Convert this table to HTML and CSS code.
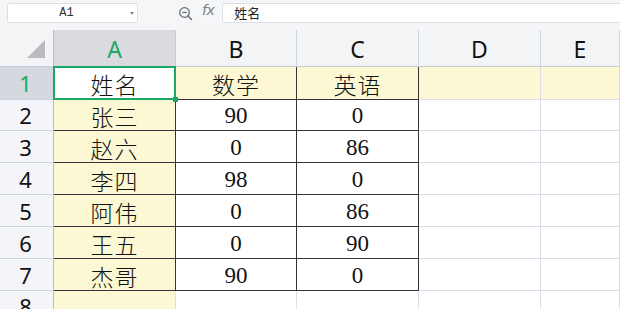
FILE: index.html
```html
<!DOCTYPE html>
<html>
<head>
<meta charset="utf-8">
<link rel="stylesheet" href="styles.css">
</head>
<body>
<div class="app">
  <div class="toolbar">
    <div class="namebox"><span class="ref">A1</span><span class="caret"></span></div>
    <svg class="zoom" width="15" height="15" viewBox="0 0 15 15">
      <circle cx="6.5" cy="6.5" r="4.8" fill="none" stroke="#6b6e75" stroke-width="1.3"/>
      <line x1="4.3" y1="6.5" x2="8.7" y2="6.5" stroke="#6b6e75" stroke-width="1.3"/>
      <line x1="10" y1="10" x2="13.5" y2="13.5" stroke="#6b6e75" stroke-width="1.5" stroke-linecap="round"/>
    </svg>
    <span class="fx">fx</span>
    <div class="formula">姓名</div>
  </div>
  <div class="sheet">
    <div class="corner"><span class="tri"></span></div>
    <div class="ch sel">A</div>
    <div class="ch">B</div>
    <div class="ch">C</div>
    <div class="ch">D</div>
    <div class="ch last">E</div>

    <div class="rh sel">1</div>
    <div class="c t active cn">姓名<span class="selbox"><span class="handle"></span></span></div>
    <div class="c t y cn">数学</div>
    <div class="c t y cn">英语</div>
    <div class="c y"></div>
    <div class="c y"></div>

    <div class="rh">2</div>
    <div class="c t y cn">张三</div>
    <div class="c t num">90</div>
    <div class="c t num">0</div>
    <div class="c"></div>
    <div class="c"></div>

    <div class="rh">3</div>
    <div class="c t y cn">赵六</div>
    <div class="c t num">0</div>
    <div class="c t num">86</div>
    <div class="c"></div>
    <div class="c"></div>

    <div class="rh">4</div>
    <div class="c t y cn">李四</div>
    <div class="c t num">98</div>
    <div class="c t num">0</div>
    <div class="c"></div>
    <div class="c"></div>

    <div class="rh">5</div>
    <div class="c t y cn">阿伟</div>
    <div class="c t num">0</div>
    <div class="c t num">86</div>
    <div class="c"></div>
    <div class="c"></div>

    <div class="rh">6</div>
    <div class="c t y cn">王五</div>
    <div class="c t num">0</div>
    <div class="c t num">90</div>
    <div class="c"></div>
    <div class="c"></div>

    <div class="rh">7</div>
    <div class="c t y cn">杰哥</div>
    <div class="c t num">90</div>
    <div class="c t num">0</div>
    <div class="c"></div>
    <div class="c"></div>

    <div class="rh">8</div>
    <div class="c y"></div>
    <div class="c"></div>
    <div class="c"></div>
    <div class="c"></div>
    <div class="c"></div>
  </div>
</div>
</body>
</html>
```
FILE: styles.css
```css
html, body {
  margin: 0;
  padding: 0;
}
body {
  width: 620px;
  height: 309px;
  overflow: hidden;
  background: #f4f5f7;
  font-family: "Noto Sans", "Noto Sans CJK SC", sans-serif;
}
.app {
  display: flex;
  flex-direction: column;
  width: 620px;
  height: 309px;
}
.toolbar {
  height: 30px;
  display: flex;
  align-items: flex-start;
  background: #f5f6f7;
  flex: none;
}
.namebox {
  margin: 3px 0 0 7px;
  width: 131px;
  height: 20px;
  box-sizing: border-box;
  background: #fff;
  border: 1px solid #dcdee3;
  border-radius: 2px;
  display: flex;
  align-items: center;
  position: relative;
}
.ref {
  flex: 1;
  text-align: center;
  padding-right: 12px;
  font-family: "Liberation Mono", monospace;
  font-size: 12px;
  color: #333;
}
.caret {
  position: absolute;
  right: 3px;
  top: 8px;
  width: 0;
  height: 0;
  border-left: 2px solid transparent;
  border-right: 2px solid transparent;
  border-top: 3px solid #888;
}
.zoom {
  margin: 6px 0 0 40px;
  flex: none;
}
.fx {
  margin: 2px 0 0 9px;
  font-family: "DejaVu Sans", sans-serif;
  font-style: italic;
  font-size: 14px;
  color: #7a7d84;
  letter-spacing: -0.5px;
}
.formula {
  margin: 3px -10px 0 8px;
  flex: 1;
  height: 20px;
  box-sizing: border-box;
  background: #fff;
  border: 1px solid #dcdee3;
  border-radius: 2px;
  padding-left: 11px;
  font-family: "Noto Sans CJK SC", sans-serif;
  font-size: 13px;
  line-height: 18px;
  color: #222;
}
.sheet {
  flex: 1;
  display: grid;
  grid-template-columns: 54px 122px 121px 122px 122px 1fr;
  grid-template-rows: 37px 33px 31px 32px 32px 32px 32px 32px 1fr;
  background: #fff;
}
.sheet > div {
  box-sizing: border-box;
  display: flex;
  align-items: center;
  justify-content: center;
}
.corner {
  background: #f3f4f6;
  border-right: 1px solid #b8bcd3;
  border-bottom: 1px solid #c8cbd6;
  position: relative;
}
.tri {
  position: absolute;
  left: 27px;
  top: 10px;
  width: 0;
  height: 0;
  border-left: 18px solid transparent;
  border-bottom: 18px solid #b9babd;
}
.ch {
  background: #f3f4f6;
  border-bottom: 1px solid #c8cbd6;
  border-right: 1px solid #d2d5dd;
  font-size: 23px;
  color: #111;
  padding-top: 1px;
}
.ch.sel {
  background: #d9dbe0;
  color: #1aa867;
  border-right-color: #c8cbd3;
}
.rh {
  background: #f4f5f8;
  border-right: 1px solid #b8bcd3;
  border-bottom: 1px solid #cdd0e0;
  font-size: 22px;
  color: #111;
  padding-right: 2px;
}
.rh.sel {
  background: #d5d8de;
  color: #1aa867;
}
.c {
  border-right: 1px solid #dcdcea;
  border-bottom: 1px solid #dcdcea;
  color: #111;
  padding-top: 2px;
}
.c.y {
  background: #fbf8d3;
}
.c.t {
  border-right-color: #333;
  border-bottom-color: #333;
}
.cn {
  font-family: "Noto Sans CJK SC", sans-serif;
  font-weight: 300;
  font-size: 23px;
  letter-spacing: 1px;
}
.num {
  font-family: "Liberation Serif", serif;
  font-size: 23px;
}
.active {
  position: relative;
  background: #fff;
}
.selbox {
  position: absolute;
  top: -1px;
  left: -1px;
  right: -1px;
  bottom: -1px;
  border: 2px solid #1ba866;
}
.handle {
  position: absolute;
  right: -4px;
  bottom: -4px;
  width: 5px;
  height: 5px;
  background: #1ba866;
}
```
